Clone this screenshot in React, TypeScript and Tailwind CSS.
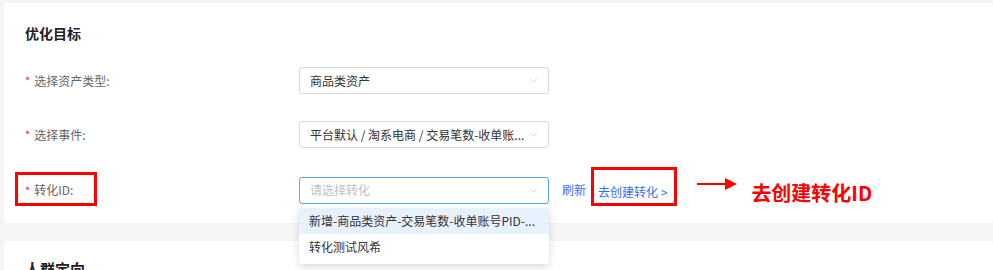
import { ChevronDown } from 'lucide-react';

const font = { fontFamily: '"Noto Sans CJK SC", "Noto Sans", sans-serif' };

function Label({ text }: { text: string }) {
  return (
    <div className="w-[274px] shrink-0 flex items-center text-[12px] text-[#666]">
      <span className="text-[#f5222d] mr-[4px] text-[11px]">*</span>
      <span>{text}</span>
    </div>
  );
}

function SelectBox({ value, placeholder, focused }: { value?: string; placeholder?: string; focused?: boolean }) {
  return (
    <div
      className={`w-[250px] h-[27px] rounded-[3px] bg-white flex items-center pl-[10px] pr-[8px] text-[12px] border ${
        focused ? 'border-[#57a3f5]' : 'border-[#d9d9d9]'
      }`}
    >
      <span className={`flex-1 whitespace-nowrap ${value ? 'text-[#333]' : 'text-[#bfbfbf]'}`}>{value ?? placeholder}</span>
      <ChevronDown className="w-[13px] h-[13px] text-[#bfbfbf] shrink-0" strokeWidth={1.2} />
    </div>
  );
}

export default function App() {
  return (
    <div className="h-[270px] overflow-hidden bg-[#f5f5f5] pt-[3px] pl-[4px]" style={font}>
      <div className="bg-white rounded-[4px] h-[220px] px-[21px] pt-[20px]">
        <h3 className="text-[14px] leading-[20px] font-bold text-[#222]">优化目标</h3>

        <div className="mt-[24px] flex items-center">
          <Label text="选择资产类型:" />
          <SelectBox value="商品类资产" />
        </div>

        <div className="mt-[27px] flex items-center">
          <Label text="选择事件:" />
          <SelectBox value="平台默认 / 淘系电商 / 交易笔数-收单账..." />
        </div>

        <div className="mt-[27px] flex items-center">
          <div className="relative">
            <Label text="转化ID:" />
            <div className="absolute left-[-10px] top-[-9px] w-[82px] h-[34px] border-[3px] border-[#ff0000]" />
          </div>
          <div className="relative">
            <SelectBox placeholder="请选择转化" focused />
            <div className="absolute left-0 top-[31px] w-[250px] bg-white rounded-[3px] shadow-[0_3px_8px_rgba(0,0,0,0.15)] pb-[4px] z-10">
              <div className="h-[26px] flex items-center px-[10px] bg-[#e8f1fe] text-[12px] text-[#333] whitespace-nowrap">
                新增-商品类资产-交易笔数-收单账号PID-...
              </div>
              <div className="h-[26px] flex items-center px-[10px] text-[12px] text-[#333]">转化测试风希</div>
            </div>
          </div>
          <span className="ml-[13px] text-[12px] text-[#3370ff]">刷新</span>
          <div className="relative ml-[12px]">
            <span className="text-[12px] text-[#3370ff]">去创建转化 &gt;</span>
            <div className="absolute left-[-7px] top-[-11px] w-[86px] h-[39px] border-[3px] border-[#ff0000]" />
          </div>
          <svg className="ml-[30px] mt-[-12px]" width="40" height="12" viewBox="0 0 40 12">
            <line x1="0" y1="6" x2="30" y2="6" stroke="#ff0000" strokeWidth="2" />
            <polygon points="28,0 40,6 28,12" fill="#ff0000" />
          </svg>
          <span className="ml-[14px] mt-[6px] text-[20px] font-bold text-[#ff0000] leading-[24px]">去创建转化ID</span>
        </div>
      </div>

      <div className="mt-[18px] bg-white rounded-[4px] h-[60px] px-[21px] pt-[18px]">
        <h3 className="text-[15px] leading-[20px] font-bold text-[#222]">人群定向</h3>
      </div>
    </div>
  );
}
